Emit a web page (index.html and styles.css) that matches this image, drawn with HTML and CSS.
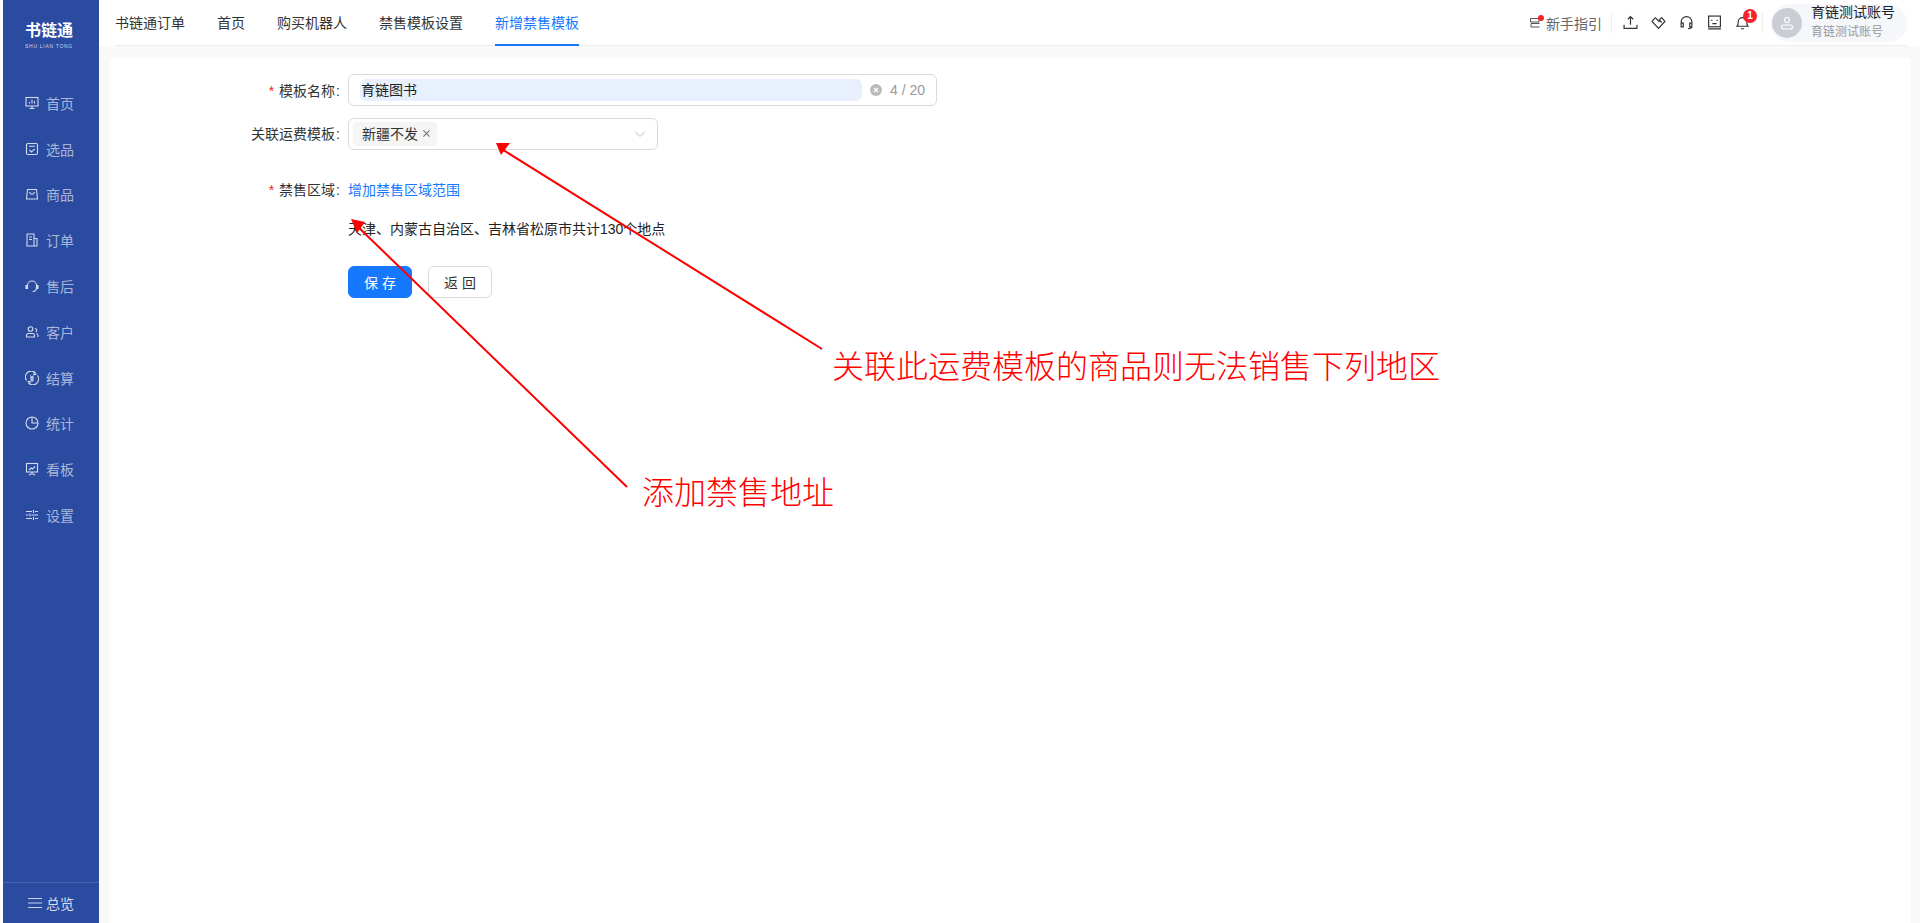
FILE: index.html
```html
<!DOCTYPE html>
<html>
<head>
	<meta charset="utf-8">
	<title>新增禁售模板</title>
	<link rel="stylesheet" href="styles.css">
</head>
<body>

	<!-- Left menu -->
	<aside class="sidebar">
		<div class="logo">
			<div class="logo-name">书链通</div>
			<div class="logo-sub">SHU LIAN TONG</div>
		</div>
		<nav class="menu">
			<a class="menu-item"><svg class="menu-icon" viewBox="0 0 14 14"><rect x="1" y="1.500" width="12" height="8.500"/><path d="M4.500 12.500h5M7 10v2.500M4.500 7.500V6M7 7.500V3.800M9.500 7.500V5"/></svg>首页</a>
			<a class="menu-item"><svg class="menu-icon" viewBox="0 0 14 14"><rect x="1.500" y="1.500" width="11" height="11" rx="1.500"/><path d="M4 4.200h6M4.500 8l2 2 3.200-3.200"/></svg>选品</a>
			<a class="menu-item"><svg class="menu-icon" viewBox="0 0 14 14"><path d="M2.500 2.500h9l1 9.500h-11zM4.500 5c.6 1.600 1.400 2.300 2.500 2.300S8.900 6.600 9.500 5"/></svg>商品</a>
			<a class="menu-item"><svg class="menu-icon" viewBox="0 0 14 14"><path d="M2 1h7v12H2zM9 5.500h3V13H9M4 4h3M4 6.500h3"/></svg>订单</a>
			<a class="menu-item"><svg class="menu-icon" viewBox="0 0 14 14"><path d="M2.500 8V6.500a4.500 4.500 0 0 1 9 0V8M11.500 8.500c0 2.500-1.500 4-4 4"/><rect x="1" y="6.500" width="1.500" height="3" fill="currentColor"/><rect x="11.500" y="6.500" width="1.500" height="3" fill="currentColor"/></svg>售后</a>
			<a class="menu-item"><svg class="menu-icon" viewBox="0 0 14 14"><circle cx="5.500" cy="4" r="2.300"/><path d="M1.500 12V10.500c0-1.200 1-2 2-2h4c1 0 2 .8 2 2V12zM10 3.500a2 2 0 0 1 1 3.500M11.500 8.500c1 .3 1.500 1 1.500 2V12"/></svg>客户</a>
			<a class="menu-item"><svg class="menu-icon" viewBox="0 0 14 14"><path d="M1.500 9.500A5.800 5.800 0 0 1 11 2.500M12.500 4.500A5.800 5.800 0 0 1 3 11.500M9 1v2.500h2.500M5 13v-2.500H2.500M5.200 4.500 7 6.500l1.800-2M5 7h4M5 9h4M7 6.500V11"/></svg>结算</a>
			<a class="menu-item"><svg class="menu-icon" viewBox="0 0 14 14"><circle cx="7" cy="7" r="6"/><path d="M7 1v6h6"/></svg>统计</a>
			<a class="menu-item"><svg class="menu-icon" viewBox="0 0 14 14"><rect x="1.500" y="1.500" width="11" height="8.500"/><path d="M4 8l2.200-2 1.300 1L10 4.500M7 10v1.500M4 13l3-1.500 3 1.500"/></svg>看板</a>
			<a class="menu-item"><svg class="menu-icon" viewBox="0 0 14 14"><path d="M1 3.500h6M10 3.500h3M1 7h2.500M6.500 7H13M1 10.500h6M10 10.500h3M8.500 2v3M5 5.500v3M8.500 9v3"/></svg>设置</a>
		</nav>
		<div class="menu-foot">
			<svg class="foot-icon" viewBox="0 0 14 12"><path d="M0 1.500h14M0 6h14M0 10.500h14"/></svg>总览
		</div>
	</aside>

	<div class="main">
		<!-- Top bar with tabs and user box -->
		<header class="topbar">
			<div class="topbar-inner">
				<div class="tabs">
					<a class="tab">书链通订单</a>
					<a class="tab">首页</a>
					<a class="tab">购买机器人</a>
					<a class="tab">禁售模板设置</a>
					<a class="tab active">新增禁售模板</a>
				</div>
				<div class="tools">
					<a class="guide">
						<span class="guide-icon">
							<svg viewBox="0 0 14 12"><path d="M2.500 1.500h8.500v3.500H2.500zM11.500 6.500H3v3.500h8.500"/></svg>
						</span>
						新手指引
					</a>
					<span class="tool-line"></span>
					<svg class="tool" viewBox="0 0 14 14"><path d="M7 9V1.500M4.500 4 7 1.500 9.500 4M1 9v3.500h12V9"/></svg>
					<svg class="tool" viewBox="0 0 14 14"><path d="M4 2.500 1 6l6 6.500L13 6l-3-3.500-2.200 2L10 7"/><path d="M4 2.500 8 6.500"/></svg>
					<svg class="tool" viewBox="0 0 14 14"><path d="M2 9V6.500a5 5 0 0 1 10 0V9M2 7.500h2V11H2zM10 7.500h2V11h-2zM12 11c0 1-1 1.700-3.500 1.700"/></svg>
					<svg class="tool" viewBox="0 0 14 14"><rect x="1.500" y="1" width="11" height="10"/><path d="M1 13h12M4.500 4.500v1M9.500 4.500v1M5 8h4"/></svg>
					<span class="bell">
						<svg class="tool" viewBox="0 0 14 14"><path d="M2 10.500c1-1 1-2 1-4a4 4 0 0 1 8 0c0 2 0 3 1 4zM5.500 12.800h3"/></svg>
						<span class="badge">1</span>
					</span>
					<span class="tool-line"></span>
					<div class="user">
						<span class="avatar">
							<svg viewBox="0 0 14 14"><circle cx="7" cy="4" r="2.500"/><rect x="1.500" y="9" width="11" height="4" rx="2"/></svg>
						</span>
						<div class="user-text">
							<div class="user-name">育链测试账号</div>
							<div class="user-sub">育链测试账号</div>
						</div>
					</div>
				</div>
			</div>
		</header>

		<!-- Form card -->
		<div class="content">
			<div class="card">
				<div class="form-row">
					<label class="form-label required">模板名称</label>
					<div class="text-input">
						<div class="input-fill">育链图书</div>
						<span class="clear-icon">
							<svg viewBox="0 0 12 12"><path d="M4 4l4 4M8 4l-4 4"/></svg>
						</span>
						<span class="count">4 / 20</span>
					</div>
				</div>
				<div class="form-row">
					<label class="form-label label-up">关联运费模板</label>
					<div class="select-box">
						<span class="tag">新疆不发
							<svg class="tag-close" viewBox="0 0 10 10"><path d="M1.500 1.500l7 7M8.500 1.500l-7 7"/></svg>
						</span>
						<svg class="chevron" viewBox="0 0 12 8"><path d="M1 1.500 6 6.500 11 1.500"/></svg>
					</div>
				</div>
				<div class="form-row area-row">
					<label class="form-label required">禁售区域</label>
					<a class="link">增加禁售区域范围</a>
				</div>
				<p class="area-text">天津、内蒙古自治区、吉林省松原市共计130个地点</p>
				<div class="btn-row">
					<button class="btn btn-primary">保 存</button>
					<button class="btn">返 回</button>
				</div>
			</div>
		</div>
	</div>

	<!-- Red notes drawn over the screenshot -->
	<svg class="arrows" viewBox="0 0 1920 923">
		<path d="M822 349 500 148M627 487 355 224"/>
		<polygon points="496,143 510,143 501,155"/>
		<polygon points="351,219 365,222 357,233"/>
	</svg>
	<div class="note note-one">关联此运费模板的商品则无法销售下列地区</div>
	<div class="note note-two">添加禁售地址</div>

</body>
</html>
```

FILE: styles.css
```css
/* Page base */
html, body {
	height: 100%;
}

body {
	margin: 0;
	display: flex;
	height: 923px;
	overflow: hidden;
	padding-left: 3px;
	box-sizing: border-box;
	background-color: #fff;
	font-family: "Liberation Sans", "Noto Sans CJK SC", sans-serif;
	font-size: 14px;
	color: #333;
}

/* Left menu */
.sidebar {
	width: 96px;
	flex-shrink: 0;
	display: flex;
	flex-direction: column;
	background-color: #2a4ba0;
	color: #a9b8da;
}

.logo {
	height: 80px;
	padding: 20px 4px 0 0;
	box-sizing: border-box;
	text-align: center;
	color: #fff;
}

.logo-name {
	font-size: 16px;
	font-weight: 700;
	line-height: 22px;
}

.logo-sub {
	font-size: 5px;
	line-height: 8px;
	letter-spacing: 0.7px;
	color: #ccd6ee;
}

.menu {
	flex: 1;
}

.menu-item {
	display: flex;
	align-items: center;
	gap: 7px;
	height: 45.8px;
	padding-left: 22px;
}

.menu-icon {
	width: 14px;
	height: 14px;
	fill: none;
	stroke: #d3dbee;
	color: #d3dbee;
	stroke-width: 1.100;
}

.menu-foot {
	height: 41px;
	display: flex;
	align-items: center;
	gap: 4px;
	padding-left: 25px;
	border-top: 1px solid #4263b0;
	box-sizing: border-box;
	color: #d5def0;
}

.foot-icon {
	width: 14px;
	height: 12px;
	fill: none;
	stroke: #c9d3ea;
	stroke-width: 1;
}

/* Right side */
.main {
	flex: 1;
	min-width: 0;
	display: flex;
	flex-direction: column;
}

.topbar {
	padding: 0 13px 0 16px;
	background-color: #fff;
}

.topbar-inner {
	height: 46px;
	box-sizing: border-box;
	display: flex;
	align-items: center;
	justify-content: space-between;
	border-bottom: 1px solid #eee;
}

.tabs {
	display: flex;
	gap: 32px;
	height: 46px;
}

.tab {
	line-height: 46px;
	height: 46px;
	box-sizing: border-box;
	color: #333;
}

.tab.active {
	color: #1677ff;
	border-bottom: 2px solid #1677ff;
}

.tools {
	display: flex;
	align-items: center;
}

.guide {
	display: flex;
	align-items: center;
	gap: 4px;
	color: #666;
}

.guide-icon {
	position: relative;
	width: 14px;
	height: 12px;
}

.guide-icon svg {
	display: block;
	width: 14px;
	height: 12px;
	fill: none;
	stroke: #555;
	stroke-width: 1;
}

.guide-icon::after {
	content: "";
	position: absolute;
	top: -2px;
	right: -2px;
	width: 6px;
	height: 6px;
	border-radius: 50%;
	background-color: #f5222d;
}

.tool-line {
	width: 1px;
	height: 20px;
	margin: 0 11px 0 9px;
	background-color: #eee;
}

.tool {
	display: block;
	width: 15px;
	height: 15px;
	margin-right: 13px;
	fill: none;
	stroke: #333;
	stroke-width: 1.100;
}

.bell {
	position: relative;
}

.bell .tool {
	margin-right: 0;
}

.badge {
	position: absolute;
	top: -6px;
	right: -7px;
	width: 14px;
	height: 14px;
	border-radius: 50%;
	background-color: #f5222d;
	color: #fff;
	font-size: 10px;
	font-weight: 700;
	line-height: 14px;
	text-align: center;
}

.tools .tool-line:nth-last-of-type(1) {
	margin: 0 8px 0 12px;
}

.user {
	width: 136px;
	height: 38px;
	display: flex;
	align-items: center;
	gap: 9px;
	padding-left: 1px;
	box-sizing: border-box;
	border-radius: 19px;
	background-color: #f5f7fa;
}

.avatar {
	width: 30px;
	height: 30px;
	display: flex;
	align-items: center;
	justify-content: center;
	border-radius: 50%;
	background-color: #c9cdd4;
}

.avatar svg {
	width: 14px;
	height: 14px;
	fill: none;
	stroke: #fff;
	stroke-width: 1.200;
}

.user-name {
	line-height: 20px;
	margin-top: -1px;
	color: #222;
}

.user-sub {
	font-size: 12px;
	line-height: 20px;
	color: #999;
}

.content {
	flex: 1;
	padding: 12px 9px 0 11px;
	background-color: #f9f9f9;
}

.card {
	height: 100%;
	padding-top: 16px;
	box-sizing: border-box;
	background-color: #fff;
	border-radius: 4px 4px 0 0;
}

/* Form rows */
.form-row {
	display: flex;
	align-items: center;
	margin-bottom: 12px;
}

.form-label {
	width: 230px;
	margin-right: 8px;
	text-align: right;
	color: #333;
}

.form-label::after {
	content: ":";
	margin-left: 1px;
}

.form-label.required::before {
	content: "*";
	margin-right: 5px;
	color: #f5222d;
}

.label-up {
	padding-bottom: 2px;
}

.text-input {
	width: 589px;
	height: 32px;
	padding: 0 11px;
	box-sizing: border-box;
	display: flex;
	align-items: center;
	border: 1px solid #d9d9d9;
	border-radius: 6px;
}

.input-fill {
	width: 502px;
	height: 22px;
	line-height: 22px;
	padding-left: 1px;
	box-sizing: border-box;
	border-radius: 6px;
	background-color: #e8f0fe;
	color: #222;
}

.clear-icon {
	width: 12px;
	height: 12px;
	margin-left: 8px;
	border-radius: 50%;
	background-color: #bbb;
}

.clear-icon svg {
	display: block;
	fill: none;
	stroke: #fff;
	stroke-width: 1.200;
}

.count {
	margin-left: 8px;
	color: #999;
	white-space: nowrap;
}

.select-box {
	width: 310px;
	height: 32px;
	padding: 0 11px 0 4px;
	box-sizing: border-box;
	display: flex;
	align-items: center;
	justify-content: space-between;
	border: 1px solid #d9d9d9;
	border-radius: 6px;
}

.tag {
	width: 84px;
	height: 24px;
	padding: 0 0 2px 9px;
	box-sizing: border-box;
	display: flex;
	align-items: center;
	gap: 4px;
	border-radius: 4px;
	background-color: #f5f5f5;
	color: #333;
}

.tag-close {
	width: 9px;
	height: 9px;
	fill: none;
	stroke: #777;
	stroke-width: 1.200;
}

.chevron {
	width: 12px;
	height: 8px;
	fill: none;
	stroke: #bfbfbf;
	stroke-width: 1;
}

.area-row {
	margin: 28px 0 0;
	height: 22px;
	padding-bottom: 2px;
}

.link {
	color: #1677ff;
}

.area-text {
	margin: 16px 0 0 238px;
	line-height: 22px;
	color: #222;
}

.btn-row {
	display: flex;
	gap: 16px;
	margin: 26px 0 0 238px;
}

.btn {
	width: 64px;
	height: 32px;
	padding: 0;
	border: 1px solid #d9d9d9;
	border-radius: 6px;
	background-color: #fff;
	font-family: inherit;
	font-size: 14px;
	color: #333;
}

.btn-primary {
	border-color: #1677ff;
	background-color: #1677ff;
	color: #fff;
}

/* Red notes over the page */
.arrows {
	position: absolute;
	top: 0;
	left: 0;
	width: 1920px;
	height: 923px;
	pointer-events: none;
}

.arrows path {
	fill: none;
	stroke: #f00;
	stroke-width: 2;
}

.arrows polygon {
	fill: #f00;
}

.note {
	position: absolute;
	font-family: "Liberation Serif", "Noto Sans CJK SC", serif;
	font-size: 32px;
	font-weight: 300;
	line-height: 40px;
	color: #f00;
	white-space: nowrap;
}

.note-one {
	top: 347px;
	left: 832px;
}

.note-two {
	top: 473px;
	left: 642px;
}
```
